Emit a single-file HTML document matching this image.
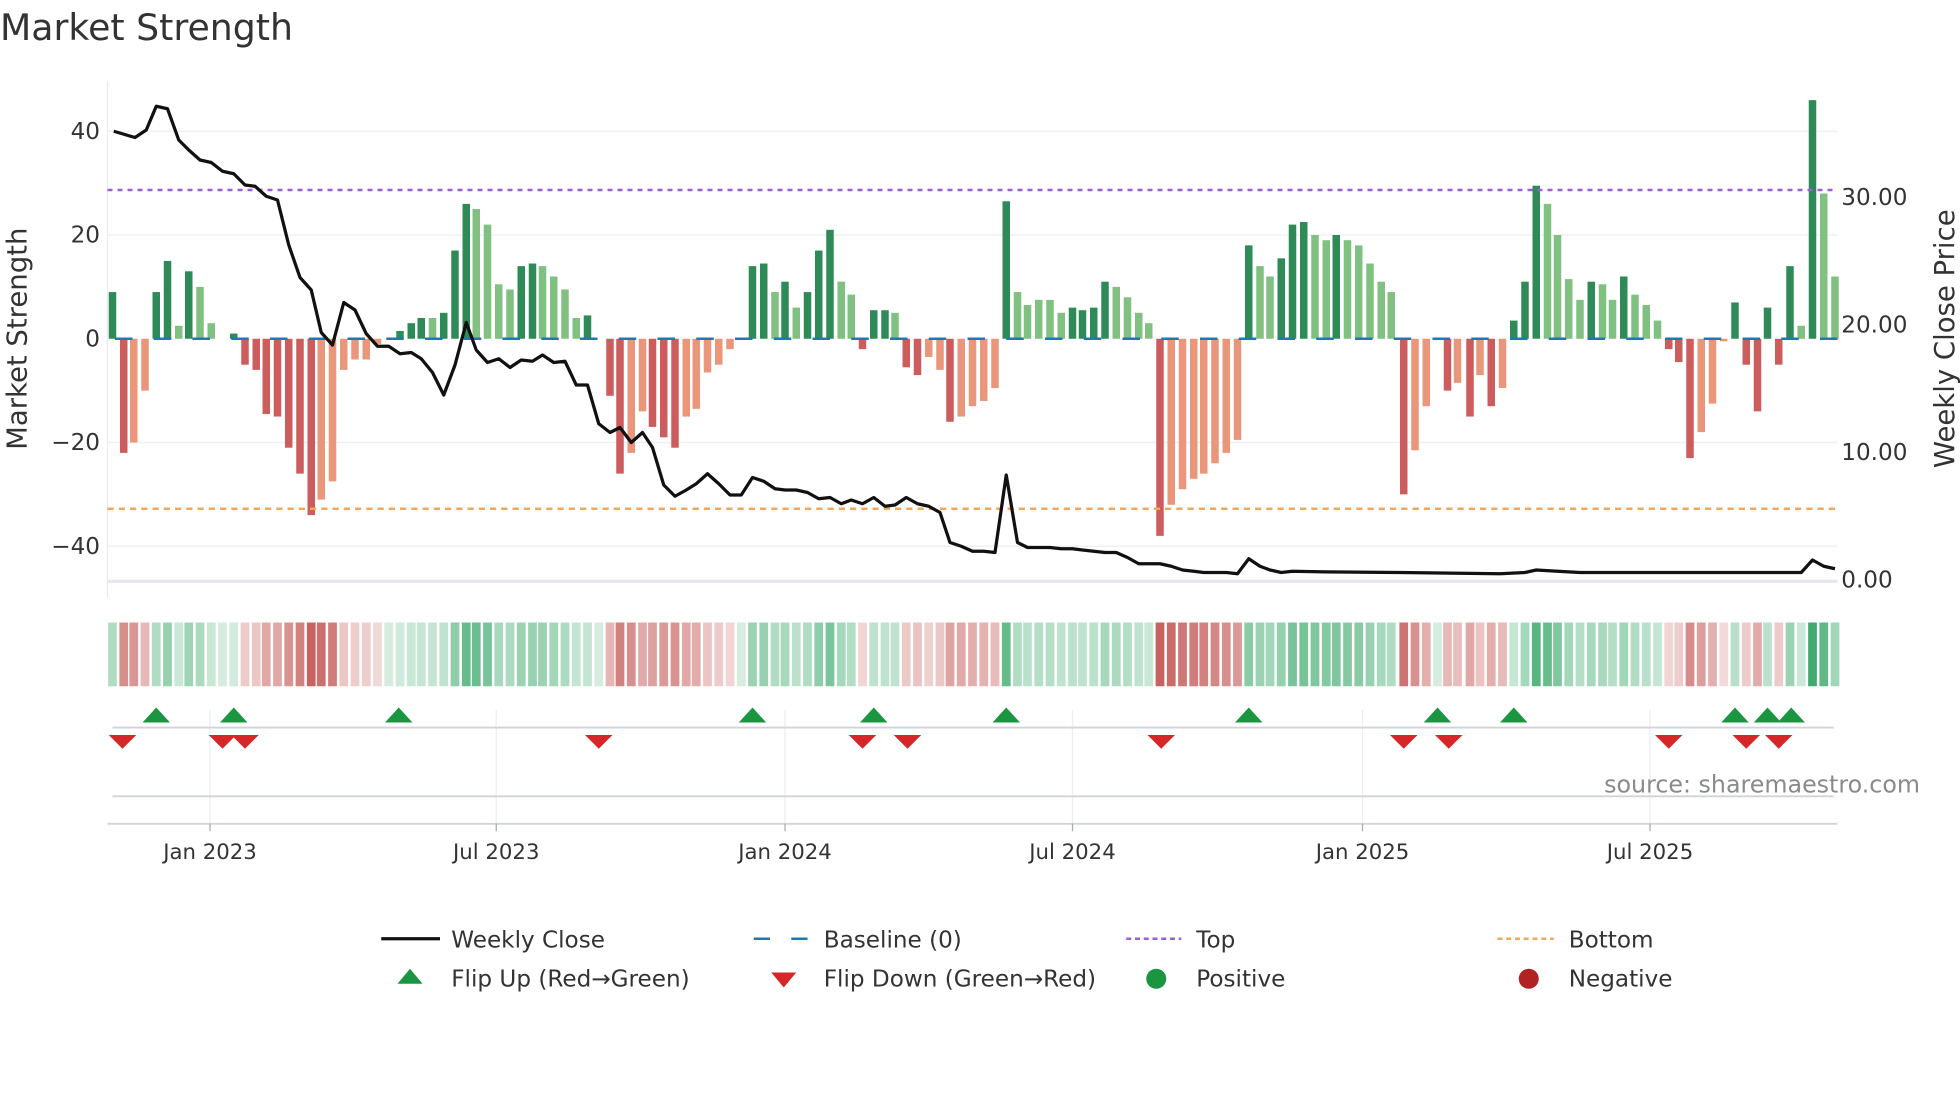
<!DOCTYPE html>
<html><head><meta charset="utf-8"><style>
html,body{margin:0;padding:0;background:#fff;}
svg{display:block;font-family:"DejaVu Sans","Liberation Sans",sans-serif;}
</style></head><body>
<svg id="s" width="1960" height="1102" viewBox="0 0 1568 881.6" xmlns="http://www.w3.org/2000/svg">
<text x="0" y="32" font-size="29" fill="#333">Market Strength</text>
<g stroke="#eef0f5" stroke-width="1.2">
<line x1="86" x2="1470" y1="105" y2="105"/><line x1="86" x2="1470" y1="188" y2="188"/>
<line x1="86" x2="1470" y1="354" y2="354"/><line x1="86" x2="1470" y1="437" y2="437"/>
</g>
<line x1="86" x2="1470" y1="465" y2="465" stroke="#e3e7f0" stroke-width="2.5"/>
<line x1="86" x2="86" y1="65" y2="478" stroke="#e8eaf0" stroke-width="1"/>
<g font-size="18.5" fill="#333" text-anchor="end">
<text x="80" y="111">40</text><text x="80" y="194">20</text><text x="80" y="277">0</text>
<text x="80" y="360">−20</text><text x="80" y="443">−40</text></g>
<g font-size="18.5" fill="#333">
<text x="1473" y="164">30.00</text><text x="1473" y="266">20.00</text>
<text x="1473" y="368">10.00</text><text x="1473" y="470">0.00</text></g>
<text transform="translate(21,271) rotate(-90)" font-size="22" fill="#333" text-anchor="middle">Market Strength</text>
<text transform="translate(1563,271) rotate(-90)" font-size="22" fill="#333" text-anchor="middle">Weekly Close Price</text>
<g id="bars"></g>
<line x1="86" x2="1470" y1="152" y2="152" stroke="#9b5fd6" stroke-width="2" stroke-dasharray="4,4"/>
<line x1="86" x2="1470" y1="407" y2="407" stroke="#f0a860" stroke-width="2" stroke-dasharray="5,4"/>
<polyline id="pl" fill="none" stroke="#111" stroke-width="2.6" stroke-linejoin="round"/>
<g id="heat"></g>
<g stroke="#eceef2" stroke-width="1">
<line x1="168" x2="168" y1="568" y2="660"/><line x1="397" x2="397" y1="568" y2="660"/>
<line x1="628" x2="628" y1="568" y2="660"/><line x1="858" x2="858" y1="568" y2="660"/>
<line x1="1090" x2="1090" y1="568" y2="660"/><line x1="1320" x2="1320" y1="568" y2="660"/></g>
<line x1="90" x2="1467" y1="582" y2="582" stroke="#d0d3d8" stroke-width="1.5"/>
<line x1="90" x2="1467" y1="637" y2="637" stroke="#d0d3d8" stroke-width="1.5"/>
<line x1="86" x2="1470" y1="659" y2="659" stroke="#d0d3d8" stroke-width="1.5"/>
<g id="marks"></g>
<g stroke="#aaa" stroke-width="1">
<line x1="168" x2="168" y1="659" y2="665"/><line x1="397" x2="397" y1="659" y2="665"/>
<line x1="628" x2="628" y1="659" y2="665"/><line x1="858" x2="858" y1="659" y2="665"/>
<line x1="1090" x2="1090" y1="659" y2="665"/><line x1="1320" x2="1320" y1="659" y2="665"/></g>
<g font-size="17" fill="#333" text-anchor="middle">
<text x="168" y="687">Jan 2023</text><text x="397" y="687">Jul 2023</text><text x="628" y="687">Jan 2024</text>
<text x="858" y="687">Jul 2024</text><text x="1090" y="687">Jan 2025</text><text x="1320" y="687">Jul 2025</text></g>
<text x="1536" y="634" font-size="19" fill="#8a8a8a" text-anchor="end">source: sharemaestro.com</text>
<g font-size="18.5" fill="#333">
<line x1="305" x2="352" y1="751" y2="751" stroke="#111" stroke-width="2.6"/><text x="361" y="758">Weekly Close</text>
<line x1="603" x2="646" y1="751" y2="751" stroke="#1f77b4" stroke-width="2" stroke-dasharray="13,17"/><text x="659" y="758">Baseline (0)</text>
<line x1="901" x2="945" y1="751" y2="751" stroke="#9b5fd6" stroke-width="2" stroke-dasharray="4,3"/><text x="957" y="758">Top</text>
<line x1="1198" x2="1243" y1="751" y2="751" stroke="#f0a860" stroke-width="2" stroke-dasharray="4,3"/><text x="1255" y="758">Bottom</text>
<polygon points="318,787 338,787 328,775" fill="#1a9641"/><text x="361" y="789">Flip Up (Red→Green)</text>
<polygon points="617,778 637,778 627,790" fill="#d62728"/><text x="659" y="789">Flip Down (Green→Red)</text>
<circle cx="925" cy="783" r="8" fill="#1a9641"/><text x="957" y="789">Positive</text>
<circle cx="1223" cy="783" r="8" fill="#b22222"/><text x="1255" y="789">Negative</text>
</g>
</svg>
<script>
var NS="http://www.w3.org/2000/svg";
function el(p,t,a){var e=document.createElementNS(NS,t);for(var k in a)e.setAttribute(k,a[k]);p.appendChild(e);return e;}
var B=[[90,9,1],[99,-22,1],[107,-20,0],[116,-10,0],[125,9,1],[134,15,1],[143,2.5,0],[151,13,1],[160,10,0],[169,3,0],[178,0,1],[187,1,1],
[196,-5,1],[205,-6,1],[213,-14.5,1],[222,-15,1],[231,-21,1],[240,-26,1],[249,-34,1],[257,-31,0],[266,-27.5,0],[275,-6,0],[284,-4,0],[293,-4,0],[302,-1,0],
[311,0,1],[320,1.5,1],[329,3,1],[337,4,1],[346,4,0],[355,5,1],[364,17,1],[373,26,1],[381,25,0],[390,22,0],[399,10.5,0],[408,9.5,0],[417,14,1],[426,14.5,1],[434,14,0],[443,12,0],[452,9.5,0],[461,4,0],[470,4.5,1],
[479,0,1],[488,-11,1],[496,-26,1],[505,-22,0],[514,-14,0],[522,-17,1],[531,-19,1],[540,-21,1],[549,-15,0],[557,-13.5,0],[566,-6.5,0],[575,-5,0],[584,-2,0],
[593,0,1],[602,14,1],[611,14.5,1],[620,9,0],[628,11,1],[637,6,0],[646,9,1],[655,17,1],[664,21,1],[673,11,0],[681,8.5,0],[690,-2,1],[699,5.5,1],[708,5.5,1],[716,5,0],
[725,-5.5,1],[734,-7,1],[743,-3.5,0],[752,-6,0],[760,-16,1],[769,-15,0],[778,-13,0],[787,-12,0],[796,-9.5,0],
[805,26.5,1],[814,9,0],[822,6.5,0],[831,7.5,0],[840,7.5,0],[849,5,0],[858,6,1],[866,5.5,1],[875,6,1],[884,11,1],[893,10,0],[902,8,0],[911,5,0],[919,3,0],
[928,-38,1],[937,-32,0],[946,-29,0],[955,-27,0],[963,-26,0],[972,-24,0],[981,-22,0],[990,-19.5,0],
[999,18,1],[1008,14,0],[1016,12,0],[1025,15.5,1],[1034,22,1],[1043,22.5,1],[1052,20,0],[1061,19,0],[1069,20,1],[1078,19,0],[1087,18,0],[1096,14.5,0],[1105,11,0],[1113,9,0],
[1123,-30,1],[1132,-21.5,0],[1141,-13,0],[1150,0,1],[1158,-10,1],[1166,-8.5,0],[1176,-15,1],[1184,-7,0],[1193,-13,1],[1202,-9.5,0],
[1211,3.5,1],[1220,11,1],[1229,29.5,1],[1238,26,0],[1246,20,0],[1255,11.5,0],[1264,7.5,0],[1273,11,1],[1282,10.5,0],[1290,7.5,0],[1299,12,1],[1308,8.5,0],[1317,6.5,0],[1326,3.5,0],
[1335,-2,1],[1343,-4.5,1],[1352,-23,1],[1361,-18,0],[1370,-12.5,0],[1379,-0.5,0],[1388,7,1],[1397,-5,1],[1406,-14,1],[1414,6,1],[1423,-5,1],[1432,14,1],[1441,2.5,0],[1450,46,1],[1459,28,0],[1468,12,0]];
var bars=document.getElementById('bars'),heat=document.getElementById('heat');
var Z=271,K=4.15;
B.forEach(function(b){
 var v=b[1],h=Math.abs(v)*K,c;
 if(v>=0)c=b[2]?'#2e8b57':'#80c080';else c=b[2]?'#cd5c5c':'#e9967a';
 if(h>0.5)el(bars,'rect',{x:b[0]-3,y:v>=0?Z-h:Z,width:6,height:h,fill:c});
 var t=Math.min(1,Math.abs(v)/35)*0.7+0.2,col;
 if(v>=0){col='rgb('+Math.round(255-(255-44)*t)+','+Math.round(255-(255-162)*t)+','+Math.round(255-(255-95)*t)+')';}
 else{col='rgb('+Math.round(255-(255-192)*t)+','+Math.round(255-(255-80)*t)+','+Math.round(255-(255-77)*t)+')';}
 el(heat,'rect',{x:b[0]-3.5,y:498,width:7,height:51,fill:col});
});
for(var x=92;x<1468;x+=31){el(bars,'line',{x1:x,x2:x+14,y1:271,y2:271,stroke:'#1f77b4','stroke-width':2});}
var P=[[91,105],[108,110],[117,104],[125,85],[134,87],[143,112],[151,120],[160,128],[169,130],[178,137],[187,139],[196,148],[204,149],[213,157],[222,160],[231,196],[240,222],[249,232],[257,266],[266,276],[275,242],[284,248],[293,267],[302,277],[311,277],[320,283],[329,282],[337,287],[346,298],[355,316],[364,292],[373,258],[381,280],[390,290],[399,287],[408,294],[417,288],[426,289],[434,284],[443,290],[452,289],[461,308],[470,308],[479,339],[488,346],[496,342],[505,354],[514,346],[522,358],[531,388],[540,397],[549,392],[557,387],[566,379],[575,387],[584,396],[593,396],[602,382],[611,385],[620,391],[628,392],[637,392],[646,394],[655,399],[664,398],[673,403],[681,400],[690,403],[699,398],[708,405],[716,404],[725,398],[734,403],[743,405],[752,410],[760,434],[769,437],[778,441],[787,441],[796,442],[805,380],[814,434],[822,438],[831,438],[840,438],[849,439],[858,439],[866,440],[875,441],[884,442],[893,442],[902,446],[911,451],[919,451],[928,451],[937,453],[946,456],[955,457],[963,458],[972,458],[981,458],[990,459],[999,447],[1008,453],[1016,456],[1025,458],[1034,457],[1060,457.5],[1120,458],[1200,459],[1220,458],[1229,456],[1246,457],[1264,458],[1290,458],[1350,458],[1441,458],[1450,448],[1459,453],[1468,455]];
document.getElementById('pl').setAttribute('points',P.map(function(p){return p.join(',')}).join(' '));
var M=document.getElementById('marks');
[125,187,319,602,699,805,999,1150,1211,1388,1414,1433].forEach(function(x){el(M,'polygon',{points:(x-11)+',578 '+(x+11)+',578 '+x+',566',fill:'#1a9641'});});
[98,178,196,479,690,726,929,1123,1159,1335,1397,1423].forEach(function(x){el(M,'polygon',{points:(x-11)+',588 '+(x+11)+',588 '+x+',599',fill:'#d62728'});});
</script>
</body></html>
